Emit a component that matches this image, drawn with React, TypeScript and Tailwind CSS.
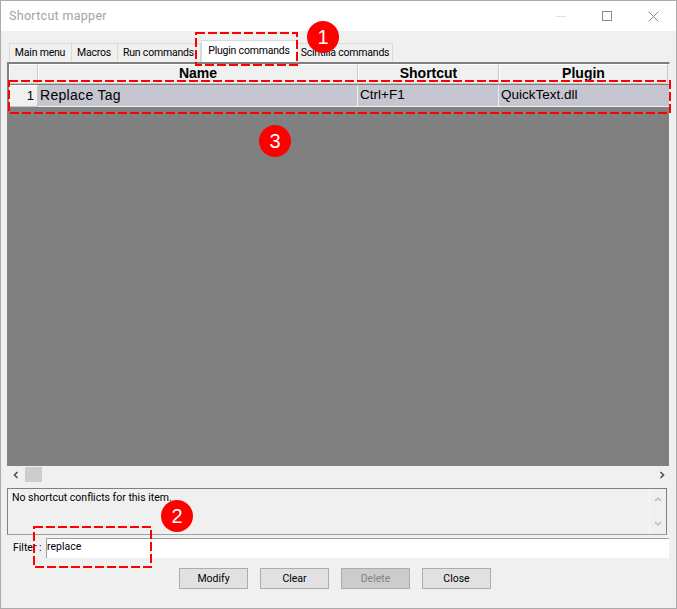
const tabs = [
  { label: 'Main menu', width: 'w-[63px]' },
  { label: 'Macros', width: 'w-[46px]' },
  { label: 'Run commands', width: 'w-[83px]' },
];

function Marker({ className, n }: { className: string; n: number }) {
  return (
    <div
      className={`absolute w-[32px] h-[32px] rounded-full bg-[#fe0000] text-white flex items-center justify-center text-[20px] font-['Liberation_Sans',sans-serif] ${className}`}
    >
      {n}
    </div>
  );
}

// red dashed annotation frame, drawn so the dash length follows the picture
function DashBox({ className, w, h }: { className: string; w: number; h: number }) {
  return (
    <svg className={`absolute ${className}`} width={w} height={h} fill="none">
      <rect x="1" y="1" width={w - 2} height={h - 2} stroke="#fe0000" strokeWidth="2" strokeDasharray="9 3" />
    </svg>
  );
}

function Button({ label, disabled }: { label: string; disabled?: boolean }) {
  return (
    <div
      className={`w-[69px] h-[21px] flex items-center justify-center border border-[#adadad] ${
        disabled ? 'bg-[#cccccc] text-[#838383]' : 'bg-[#e1e1e1] text-black'
      }`}
    >
      {label}
    </div>
  );
}

export default function App() {
  return (
    <div className="relative w-[677px] h-[609px] flex flex-col bg-[#f0f0f0] border border-[#ababab] overflow-hidden font-['Roboto',sans-serif] text-[10.5px] text-black">
      {/* Title bar */}
      <div className="h-[30px] shrink-0 bg-white flex items-center justify-between pl-[8px]">
        <span className="text-[12.5px] text-[#a3a3a3] tracking-[0.3px]">Shortcut mapper</span>
        <div className="flex items-center">
          <div className="w-[46px] flex justify-center">
            <div className="w-[10px] h-px bg-[#e0e0e0]" />
          </div>
          <div className="w-[46px] flex justify-center">
            <div className="w-[10px] h-[10px] border border-[#8a8a8a]" />
          </div>
          <div className="w-[46px] flex justify-center">
            <svg width="11" height="11" viewBox="0 0 11 11" stroke="#8a8a8a" fill="none">
              <path d="M0.5 0.5 L10.5 10.5 M10.5 0.5 L0.5 10.5" />
            </svg>
          </div>
        </div>
      </div>

      {/* Tabs */}
      <div className="h-[31px] shrink-0 pl-[8px] flex items-end tracking-[-0.2px]">
        {tabs.map((tab) => (
          <div
            key={tab.label}
            className={`${tab.width} h-[19px] shrink-0 pr-[1px] flex items-center justify-center bg-[#f0f0f0] border border-b-0 border-l-0 first:border-l border-[#d9d9d9] whitespace-nowrap`}
          >
            {tab.label}
          </div>
        ))}
        <div className="w-[97px] h-[22px] shrink-0 pb-[1px] pr-[1px] flex items-center justify-center bg-white border border-b-0 border-[#d9d9d9] whitespace-nowrap">
          Plugin commands
        </div>
        <div className="w-[95px] h-[19px] shrink-0 flex items-center justify-center bg-[#f0f0f0] border border-b-0 border-l-0 border-[#d9d9d9] whitespace-nowrap">
          Scintilla commands
        </div>
      </div>

      {/* Grid */}
      <div className="ml-[6px] mr-[6px] h-[404px] shrink-0 flex flex-col border-l-2 border-t-2 border-[#808080] bg-[#808080] border-r border-r-[#f0f0f0]">
        <div className="h-[20px] shrink-0 flex bg-[#f0f0f0] pr-[1px] font-['Liberation_Sans',sans-serif] font-bold text-[14px] leading-none">
          <div className="w-[29px] border border-[#c8c8c8] border-l-white border-t-white" />
          <div className="w-[320px] pb-[2px] flex items-center justify-center border border-[#c8c8c8] border-l-white border-t-white">Name</div>
          <div className="w-[141px] pb-[2px] flex items-center justify-center border border-[#c8c8c8] border-l-white border-t-white">Shortcut</div>
          <div className="flex-1 pb-[2px] flex items-center justify-center border border-[#c8c8c8] border-l-white border-t-white">Plugin</div>
        </div>
        <div className="h-[22px] mt-px shrink-0 flex bg-[#c6c6d0] font-['Liberation_Sans',sans-serif] text-[13.5px] leading-none">
          <div className="w-[29px] pr-[3px] pb-[2px] flex items-center justify-end text-[13px] bg-[#f0f0f0] border border-[#c8c8c8] border-l-white border-t-white">1</div>
          <div className="w-[320px] pl-[2px] pb-[2px] flex items-center text-[14px] tracking-[0.3px] border-b border-r border-[#f0f0f0]">Replace Tag</div>
          <div className="w-[141px] pl-[2px] pb-[2px] flex items-center border-b border-r border-[#f0f0f0]">Ctrl+F1</div>
          <div className="flex-1 pl-[2px] pb-[2px] flex items-center border-b border-[#f0f0f0]">QuickText.dll</div>
        </div>
      </div>

      {/* Horizontal scrollbar */}
      <div className="ml-[8px] mr-[7px] h-[17px] shrink-0 flex items-center justify-between px-[3px] bg-[#f0f0f0]">
        <div className="flex items-center">
          <svg width="8" height="8" viewBox="0 0 8 8" fill="none" stroke="#505050" strokeWidth="1.6">
            <path d="M5.5 1 L2.5 4 L5.5 7" />
          </svg>
          <div className="ml-[5px] w-[17px] h-[15px] bg-[#cdcdcd]" />
        </div>
        <svg width="8" height="8" viewBox="0 0 8 8" fill="none" stroke="#505050" strokeWidth="1.6">
          <path d="M2.5 1 L5.5 4 L2.5 7" />
        </svg>
      </div>

      {/* Conflict info */}
      <div className="mt-[5px] ml-[6px] mr-[9px] h-[47px] shrink-0 flex border border-[#808080] border-b-[#a0a0a0] border-r-[#808080]">
        <div className="flex-1 pl-[4px] pt-[1px] leading-[16px]">No shortcut conflicts for this item.</div>
        <div className="w-[17px] flex flex-col items-center justify-between py-[7px] border-l border-[#f8f8f8]">
          <svg width="8" height="6" viewBox="0 0 8 6" fill="none" stroke="#bcbcbc" strokeWidth="1.5">
            <path d="M1 5 L4 2 L7 5" />
          </svg>
          <svg width="8" height="6" viewBox="0 0 8 6" fill="none" stroke="#bcbcbc" strokeWidth="1.5">
            <path d="M1 1 L4 4 L7 1" />
          </svg>
        </div>
      </div>

      {/* Filter */}
      <div className="mt-[3px] ml-[12px] mr-[7px] h-[20px] shrink-0 flex items-center">
        <span className="w-[33px] shrink-0 whitespace-nowrap">Filter :</span>
        <div className="flex-1 h-[20px] bg-white border-t border-l border-[#a0a0a0] leading-[15px]">replace</div>
      </div>

      {/* Buttons */}
      <div className="mt-[10px] pl-[178px] flex gap-[12px]">
        <Button label="Modify" />
        <Button label="Clear" />
        <Button label="Delete" disabled />
        <Button label="Close" />
      </div>

      {/* Annotations */}
      <DashBox className="left-[194px] top-[31px]" w={103} h={34} />
      <DashBox className="left-[7px] top-[79px]" w={663} h={34} />
      <DashBox className="left-[32px] top-[525px]" w={119} h={42} />
      <Marker className="left-[306px] top-[20px]" n={1} />
      <Marker className="left-[258px] top-[124px]" n={3} />
      <Marker className="left-[160px] top-[499px]" n={2} />
    </div>
  );
}
